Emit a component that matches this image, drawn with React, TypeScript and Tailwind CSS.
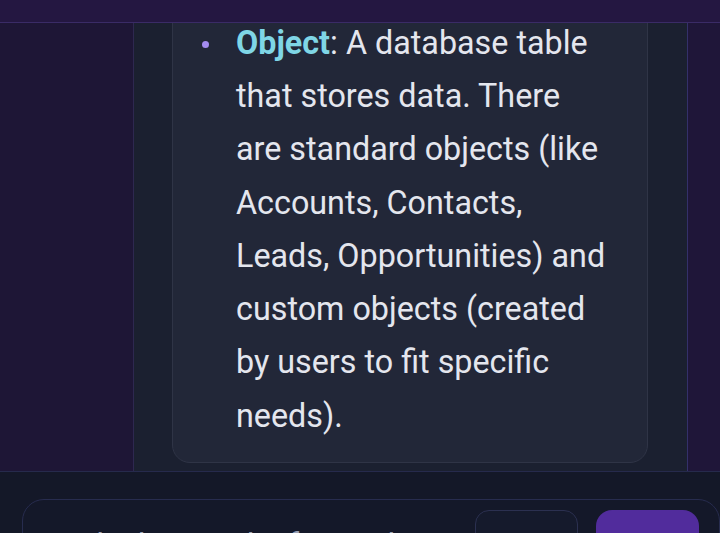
export default function App() {
  return (
    <div
      className="flex h-[533px] w-[720px] flex-col overflow-hidden bg-[#141828] text-[#e4e6ee]"
      style={{ fontFamily: 'Roboto, "Noto Sans", sans-serif' }}
    >
      <div className="h-[23px] shrink-0 border-b border-[#3a2b66] bg-[#241741]" />

      <div className="flex h-[449px] shrink-0 border-b border-[#262a4c]">
        <div className="w-[134px] shrink-0 border-r border-[#2e2850] bg-[#1e1636]" />

        <div className="flex flex-1 flex-col justify-end overflow-hidden bg-[#1b2030] pb-[8px] pl-[38px] pr-[39px]">
          <div className="shrink-0 rounded-[18px] border border-[#2f3446] bg-[#222738] pb-[19px] pl-[29px] pr-[20px] pt-[20px]">
            <ul className="text-[32.3px] leading-[53.3px]">
              <li className="flex">
                <span className="mr-[27px] mt-[24px] h-[7px] w-[7px] shrink-0 rounded-full bg-[#a48cf0]" />
                <span className="whitespace-nowrap">
                  <strong className="font-bold text-[#7fd6e6]">Object</strong>: A database table
                  <br />
                  that stores data. There
                  <br />
                  are standard objects (like
                  <br />
                  Accounts, Contacts,
                  <br />
                  Leads, Opportunities) and
                  <br />
                  custom objects (created
                  <br />
                  by users to fit specific
                  <br />
                  needs).
                </span>
              </li>
            </ul>
          </div>
        </div>

        <div className="w-[33px] shrink-0 border-l border-[#34306a] bg-[#1f1639]" />
      </div>

      <div className="flex-1 pl-[22px] pt-[27px]">
        <div className="flex h-[80px] items-start rounded-tl-[22px] rounded-tr-[22px] border border-[#272c4e] bg-[#141829] pl-[36px] pr-[20px] pt-[10px]">
          <div className="min-w-0 flex-1 overflow-hidden whitespace-nowrap pt-[18px] text-[32px] leading-none text-[#9aa0b4]">
            Ask about Salesforce objects…
          </div>
          <div className="ml-[12px] h-[60px] w-[103px] shrink-0 rounded-[14px] border border-[#2b3050] bg-[#151a2c]" />
          <div className="ml-[18px] h-[60px] w-[103px] shrink-0 rounded-[16px] bg-[#512c9c]" />
        </div>
      </div>
    </div>
  );
}
